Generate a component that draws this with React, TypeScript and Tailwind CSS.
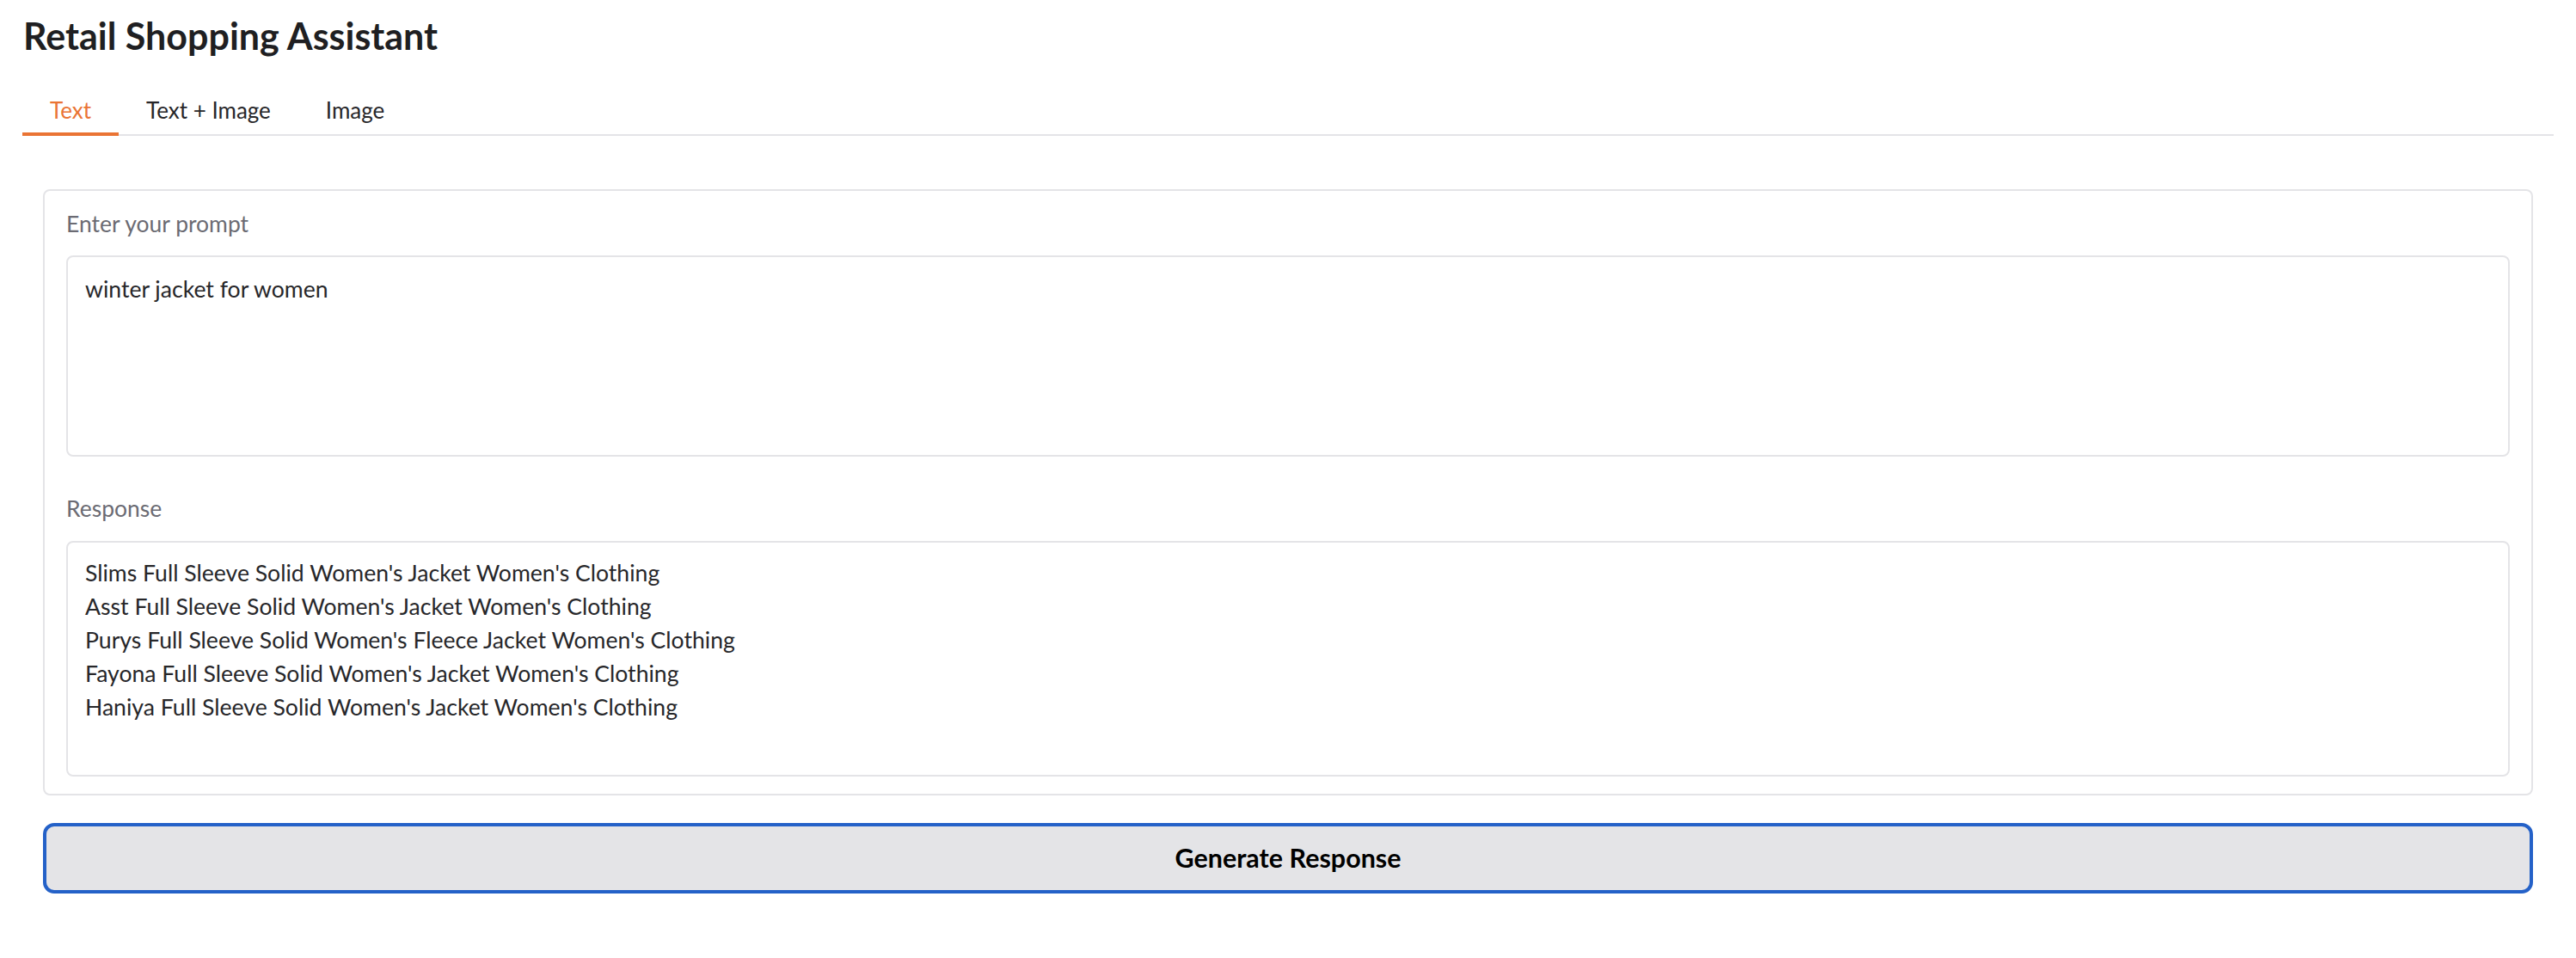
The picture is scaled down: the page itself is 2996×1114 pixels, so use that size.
import { useState } from "react";

const tabs = ["Text", "Text + Image", "Image"];

const results = [
  "Slims Full Sleeve Solid Women's Jacket Women's Clothing",
  "Asst Full Sleeve Solid Women's Jacket Women's Clothing",
  "Purys Full Sleeve Solid Women's Fleece Jacket Women's Clothing",
  "Fayona Full Sleeve Solid Women's Jacket Women's Clothing",
  "Haniya Full Sleeve Solid Women's Jacket Women's Clothing",
];

export default function App() {
  const [active, setActive] = useState("Text");
  const [prompt, setPrompt] = useState("winter jacket for women");

  return (
    <div className="min-h-screen bg-white px-[26px] pt-[21px] font-['Lato',sans-serif] text-[#27272a]">
      <h1 className="pl-[1px] text-[43px] font-bold leading-[42px] text-[#1f1f22]">
        Retail Shopping Assistant
      </h1>

      <div className="mt-[37px] flex border-b-2 border-[#e4e4e7]">
        {tabs.map((t) => (
          <button
            key={t}
            onClick={() => setActive(t)}
            className={
              "-mb-[2px] border-b-[4px] px-[32px] pt-[12px] pb-[10px] text-[26px] leading-[32px] " +
              (active === t
                ? "border-[#ea7434] text-[#ea7434]"
                : "border-transparent text-[#27272a]")
            }
          >
            {t}
          </button>
        ))}
      </div>

      <div className="px-[24px] pt-[62px]">
        <div className="rounded-[8px] border-2 border-[#e4e4e7] px-[25px] pt-[22px] pb-[20px]">
          <label className="block text-[26.5px] leading-[32px] text-[#6b6b73]">
            Enter your prompt
          </label>
          <textarea
            value={prompt}
            onChange={(e) => setPrompt(e.target.value)}
            className="mt-[21px] block h-[234px] w-full resize-none rounded-[8px] border-2 border-[#e4e4e7] px-[20px] pt-[18px] text-[26.6px] leading-[39px] text-[#27272a] outline-none"
          />

          <label className="mt-[44px] block text-[26.5px] leading-[32px] text-[#6b6b73]">
            Response
          </label>
          <div className="mt-[22px] h-[274px] rounded-[8px] border-2 border-[#e4e4e7] px-[20px] pt-[16px] text-[26.6px] leading-[39px] text-[#27272a]">
            {results.map((r) => (
              <div key={r}>{r}</div>
            ))}
          </div>
        </div>

        <button className="mt-[32px] flex h-[82px] w-full items-center justify-center rounded-[13px] border-[4px] border-[#2461c8] bg-[#e4e4e7] text-[30.5px] font-bold text-black">
          Generate Response
        </button>
      </div>
    </div>
  );
}
